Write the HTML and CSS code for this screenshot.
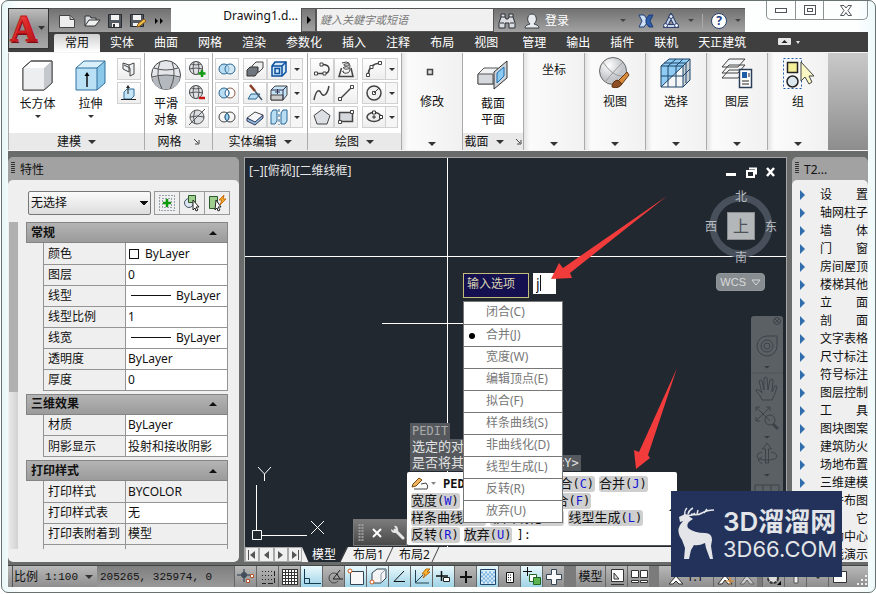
FILE: index.html
```html
<!DOCTYPE html>
<html lang="zh-CN">
<head>
<meta charset="utf-8">
<title>Drawing1.dwg</title>
<link rel="stylesheet" href="styles.css">
</head>
<body>
<div class="window">
  <header class="titlebar">
    <button class="app-button" aria-label="应用程序菜单">
      <svg width="39" height="39" viewBox="0 0 39 39">
        <defs>
          <linearGradient id="red" x1="0" y1="0" x2="1" y2="1"><stop offset="0" stop-color="#ff8d84"/><stop offset=".45" stop-color="#e22b2b"/><stop offset="1" stop-color="#a30f16"/></linearGradient>
        </defs>
        <text x="2" y="34" class="logo-back">A</text>
        <text x="1" y="32" class="logo-front">A</text>
        <path d="M29 17h7l-3.500 4z" fill="#333"/>
      </svg>
    </button>
    <div class="quick-access">
      <button aria-label="新建"><svg width="18" height="16" viewBox="0 0 18 16"><path d="M1.500 2.500h11l4 4v8h-15z" fill="#eee" stroke="#444"/><path d="M12 2.500v4h4" fill="#bbb" stroke="#444"/></svg></button>
      <button aria-label="打开"><svg width="18" height="16" viewBox="0 0 18 16"><path d="M2 13V3h5l1 2h5v3" fill="#d8dce2" stroke="#333"/><path d="M2 13l4-6h11l-5 6z" fill="#f1f1f1" stroke="#333"/></svg></button>
      <button aria-label="保存"><svg width="16" height="16" viewBox="0 0 16 16"><path d="M1.500 1.500h13v13h-13z" fill="#51585f" stroke="#272b30"/><path d="M4 2h8v5H4zM5 10h7v4H5z" fill="#f2f2f2"/><path d="M6 11h2v3H6z" fill="#333"/></svg></button>
      <button aria-label="另存为"><svg width="18" height="16" viewBox="0 0 18 16"><path d="M1.500 1.500h13v12h-13z" fill="#51585f" stroke="#272b30"/><path d="M4 2h8v5H4zM4 10h5v3H4z" fill="#f2f2f2"/><path d="M8 14l1-3 6-5 2 2-6 5z" fill="#f3c14b" stroke="#8a5a14"/></svg></button>
      <button aria-label="更多"><svg width="10" height="8" viewBox="0 0 10 8"><path d="M1 1l3 3-3 3zM6 1l3 3-3 3z"/></svg></button>
    </div>
    <h1 class="doc-title">Drawing1.d...</h1>
    <button class="search-toggle" aria-label="展开搜索"><svg width="6" height="8" viewBox="0 0 6 8"><path d="M1 0l4 4-4 4z"/></svg></button>
    <input class="search" type="text" aria-label="搜索" placeholder="鍵入关鍵字或短语">
    <div class="infobar">
      <button aria-label="查找"><svg width="18" height="18" viewBox="0 0 18 18"><path d="M3 2h4v3l1 2h2l1-2V2h4v3l2 6v5h-6v-5H7v5H1v-5l2-6z" fill="#d9dde2" stroke="#2c3036"/><path d="M2 11h4M12 11h4M3 5h4M11 5h4" stroke="#2c3036"/></svg></button>
      <button class="signin"><svg width="16" height="16" viewBox="0 0 16 16"><path d="M1 15c0-3 3-3 5-4-2-2-3-4-2-7 1-4 7-4 8 0 1 3 0 5-2 7 2 1 5 1 5 4z" fill="#e8ebef" stroke="#3b4046"/></svg>登录</button>
      <i class="caret dark push"></i>
      <button aria-label="交换"><svg width="16" height="14" viewBox="0 0 16 14"><path d="M1 1h5l3 4v4l-3 4H1l3-6z" fill="#cfe0f5" stroke="#1d3d78"/><path d="M15 1h-4L8 5v4l3 4h4l-3-6z" fill="#2e5ca8" stroke="#1d3d78"/></svg></button>
      <button aria-label="联机"><svg width="18" height="16" viewBox="0 0 18 16"><path d="M9 3L4 13h10z" fill="none" stroke="#2d3f6b" stroke-width="4"/><path d="M9 3L4 13h10z" fill="none" stroke="#c9d5ea" stroke-width="2"/><circle cx="9" cy="3.500" r="2" fill="#e5ebf5" stroke="#2d3f6b"/><circle cx="3.500" cy="12.500" r="2" fill="#e5ebf5" stroke="#2d3f6b"/><circle cx="14.500" cy="12.500" r="2" fill="#e5ebf5" stroke="#2d3f6b"/></svg></button>
      <i class="caret dark"></i>
      <span class="rule"></span>
      <button class="help" aria-label="帮助">?</button>
      <i class="caret dark"></i>
    </div>
    <div class="window-controls">
      <button aria-label="最小化"><svg width="14" height="8" viewBox="0 0 14 8"><rect x="1.500" y="2.500" width="11" height="4" fill="#fff" stroke="#50565c"/></svg></button>
      <button aria-label="还原"><svg width="14" height="11" viewBox="0 0 14 11"><rect x="1.500" y=".5" width="11" height="9" fill="#fff" stroke="#50565c"/><rect x="4.500" y="3.500" width="5" height="3" fill="#fff" stroke="#50565c"/></svg></button>
      <button class="close" aria-label="关闭"><svg width="14" height="11" viewBox="0 0 14 11"><path d="M1.500.5h3.500l2 2.500 2-2.500h3.500L9 5.500l3.500 5H9l-2-3-2 3H1.500l3.500-5z" fill="#fff" stroke="#50565c"/></svg></button>
    </div>
  </header>

  <nav class="tabs">
    <a class="tab active" href="#">常用</a><a class="tab" href="#">实体</a><a class="tab" href="#">曲面</a><a class="tab" href="#">网格</a><a class="tab" href="#">渲染</a><a class="tab" href="#">参数化</a><a class="tab" href="#">插入</a><a class="tab" href="#">注释</a><a class="tab" href="#">布局</a><a class="tab" href="#">视图</a>
    <span class="tab-group"><a class="tab" href="#">管理</a><a class="tab" href="#">输出</a><a class="tab" href="#">插件</a><a class="tab" href="#">联机</a><a class="tab" href="#">天正建筑</a></span>
    <button class="ribbon-toggle" aria-label="最小化功能区"><svg width="22" height="8" viewBox="0 0 22 8"><rect width="13" height="7" rx="1" fill="#e6e6e6"/><path d="M3.500 5l3-3 3 3z" fill="#222"/><path d="M18 3h4l-2 3z" fill="#e6e6e6"/></svg></button>
  </nav>

  <div class="ribbon">
    <section class="panel">
      <div class="tools">
        <button class="big"><svg width="32" height="32" viewBox="0 0 32 32"><path d="M1 9l8-7h21v22l-8 7H1z" fill="#fff" stroke="#4a4a4a"/><path d="M1 9h21v22H1z" fill="#eceef0"/><path d="M22 9l8-7v22l-8 7z" fill="#c4c8cc"/><path d="M1 9l8-7h21v22l-8 7H1z" fill="none" stroke="#4a4a4a"/></svg><span>长方体</span><i class="caret"></i></button>
        <button class="big"><svg width="32" height="32" viewBox="0 0 32 32"><path d="M1 9l8-7h21v22l-8 7H1z" fill="#d9effa"/><path d="M1 9h21v22H1z" fill="#b9e0f5"/><path d="M22 9l8-7v22l-8 7z" fill="#8cc8ea"/><path d="M1 9l8-7h21v22l-8 7H1zM1 9h21v22M22 9l8-7" fill="none" stroke="#2e6f9c"/><path d="M12 28V15" stroke="#111" stroke-width="1.500"/><path d="M9.500 17l2.500-4 2.500 4z"/></svg><span>拉伸</span><i class="caret"></i></button>
        <div class="stack">
          <button class="small" aria-label="多段体"><svg viewBox="0 0 18 18"><path d="M3 3l6 2v7l-6-3zM9 5l5-2v11l-4 2v-8l-6-3" fill="#eef1f4" stroke="#444"/></svg></button>
          <button class="small" aria-label="按住并拖动"><svg viewBox="0 0 18 18"><path d="M4 15V8l3-3h7v7l-3 3z" fill="#c5e4f5" stroke="#2e6f9c"/><path d="M1 15.500h15M8 10V3" stroke="#222"/><path d="M6 4l2-3 2 3z" fill="#222"/></svg></button>
        </div>
      </div>
      <footer>建模<i class="caret wide"></i></footer>
    </section>

    <section class="panel">
      <div class="tools">
        <button class="big narrow"><svg width="32" height="32" viewBox="0 0 32 32"><circle cx="16" cy="16" r="14.500" fill="#e3e6ea" stroke="#444"/><path d="M2 19q14-5 28 0-2 11-14 11.500Q4 30 2 19z" fill="#b4b9bf"/><path d="M4 9q12 4 24 0M2 18q14-4 28 0M10 3q-5 13 2 27M22 3q5 13-2 27" fill="none" stroke="#555"/></svg><span>平滑<br>对象</span></button>
        <div class="stack">
          <button class="small" aria-label="提高平滑度"><svg viewBox="0 0 18 18"><circle cx="8" cy="8" r="6.500" fill="#e0e3e6" stroke="#444"/><path d="M1 9q7-2 14 0M3 4q5 2 10 0M6 2q-2 6 0 12M10 2q2 6 0 12" fill="none" stroke="#555"/><path d="M14 10v7M10.500 13.500h7" stroke="#129a12" stroke-width="2.500"/></svg></button>
          <button class="small" aria-label="降低平滑度"><svg viewBox="0 0 18 18"><circle cx="8" cy="8" r="6.500" fill="#e0e3e6" stroke="#444"/><path d="M1 9q7-2 14 0M3 4q5 2 10 0M6 2q-2 6 0 12M10 2q2 6 0 12" fill="none" stroke="#555"/><path d="M11 14h6" stroke="#cc1717" stroke-width="2.500"/></svg></button>
          <button class="small" aria-label="优化网格"><svg viewBox="0 0 18 18"><circle cx="9" cy="9" r="7" fill="#dcdfe2" stroke="#555"/><path d="M2 9q7-2 14 0M7 2q-3 7 0 14M1 17L17 1" fill="none" stroke="#555"/></svg></button>
        </div>
      </div>
      <footer>网格<svg class="launcher" width="7" height="7" viewBox="0 0 7 7"><path d="M1 1l4 4M6 2v4H2" fill="none" stroke="#444"/></svg></footer>
    </section>

    <section class="panel">
      <div class="tools">
        <div class="stack first">
          <button class="small" aria-label="并集"><svg viewBox="0 0 18 18"><circle cx="6" cy="9" r="5" fill="#b9ddf2" stroke="#2a6795"/><circle cx="12" cy="9" r="5" fill="#b9ddf2" fill-opacity=".6" stroke="#2a6795"/></svg></button>
          <button class="small" aria-label="差集"><svg viewBox="0 0 18 18"><circle cx="12" cy="9" r="5" fill="#fff" stroke="#8a5c48"/><circle cx="6" cy="9" r="5" fill="#b9ddf2" stroke="#2a6795"/><path d="M9 5q-4 4 0 8 4-4 0-8z" fill="#fff" stroke="#2a6795"/></svg></button>
          <button class="small" aria-label="交集"><svg viewBox="0 0 18 18"><circle cx="6" cy="9" r="5" fill="none" stroke="#444"/><circle cx="12" cy="9" r="5" fill="none" stroke="#444"/><path d="M9 5q4 4 0 8-4-4 0-8z" fill="#9fd0ee" stroke="#2a6795"/></svg></button>
        </div>
        <div class="stack spaced">
          <button class="small" aria-label="干涉"><svg viewBox="0 0 18 18"><path d="M6 6l4-4h7v6l-4 4H6z" fill="#eee" stroke="#444"/><path d="M1 10l3-3h8v5l-3 4H1z" fill="#70767d" stroke="#333"/></svg></button>
          <button class="small" aria-label="剖切"><svg viewBox="0 0 18 18"><path d="M2 15l3-5h9l-4 5z" fill="#b9ddf2" stroke="#2a6795"/><path d="M4 1l5 6" stroke="#8a3b22" stroke-width="2.500"/><path d="M9 7l3 4 4 5" fill="none" stroke="#456" stroke-width="1.500"/></svg></button>
          <button class="small" aria-label="加厚"><svg viewBox="0 0 18 18"><path d="M1 10l8-6 8 3-8 8z" fill="#f4f6f8" stroke="#444"/><path d="M1 10l8 4 8-7v3l-8 7-8-4z" fill="#8dbddd" stroke="#335"/></svg></button>
        </div>
        <div class="stack">
          <div class="split"><button class="small" aria-label="拉伸面"><svg viewBox="0 0 18 18"><path d="M2 6l3-4h11v10l-4 4H2z" fill="#cfe6f7" stroke="#0b4f9c" stroke-width="1.500"/><path d="M5 8.500h4.500v5H5zM12 16V6H2M12 6l4-4" fill="none" stroke="#0b4f9c" stroke-width="1.500"/></svg></button><button class="drop" aria-label="更多"><i class="caret"></i></button></div>
          <div class="split"><button class="small" aria-label="提取边"><svg viewBox="0 0 18 18"><path d="M1 6l4-4h12v9l-4 5H1z" fill="#c5e4f5" stroke="#444"/><path d="M1 11h12v5H1z" fill="#ccc" stroke="#444"/><path d="M13 6v10M1 6h12l4-4M5 8h5M7.500 5v5" fill="none" stroke="#335"/></svg></button><button class="drop" aria-label="更多"><i class="caret"></i></button></div>
          <div class="split"><button class="small" aria-label="分割"><svg viewBox="0 0 18 18"><path d="M1 5l2-3h4v11l-2 3H1zM11 5l2-3h4v11l-2 3h-4z" fill="#b9ddf2" stroke="#2a6795"/><path d="M9 1v16" stroke="#2a6795" stroke-dasharray="3 2"/></svg></button><button class="drop" aria-label="更多"><i class="caret"></i></button></div>
        </div>
      </div>
      <footer>实体编辑<i class="caret wide"></i></footer>
    </section>

    <section class="panel">
      <div class="tools">
        <div class="stack first">
          <button class="small" aria-label="多段线"><svg viewBox="0 0 18 18"><path d="M3 13.500h8q5 0 5-4.500t-7-4.500" fill="none" stroke="#444" stroke-width="1.500"/><path d="M1.500 12h3v3h-3zM7 3h3v3H7zM10 12h3v3h-3z" fill="#fff" stroke="#444"/></svg></button>
          <button class="small" aria-label="样条曲线"><svg viewBox="0 0 18 18"><path d="M1 16C3 6 6 5 8 9s6 3 8-7" fill="none" stroke="#444" stroke-width="1.500"/></svg></button>
          <button class="small" aria-label="多边形"><svg viewBox="0 0 18 18"><path d="M9 1.500l8 6-3 8.500H4L1 7.500z" fill="#dce0e4" stroke="#444"/></svg></button>
        </div>
        <div class="stack">
          <button class="small" aria-label="螺旋"><svg viewBox="0 0 18 18"><path d="M5 3q5-2 7 0 1 3-3 3-4-1-1-2 5-1 5 2 0 4-5 3-3-1-1-2 6-1 6 3-1 4-6 3-3-2 0-2" fill="none" stroke="#444"/><path d="M4.500 8L2 16.500h14L14 8" fill="none" stroke="#444" stroke-width="1.500"/></svg></button>
          <button class="small" aria-label="直线"><svg viewBox="0 0 18 18"><path d="M3 15L15 3" stroke="#444" stroke-width="1.500"/><path d="M1.500 13.500h3v3h-3zM13.500 1.500h3v3h-3z" fill="#fff" stroke="#444"/></svg></button>
          <button class="small" aria-label="矩形"><svg viewBox="0 0 18 18"><path d="M2.500 4.500h13v9h-13z" fill="#d5d8dc" stroke="#444" stroke-width="1.500"/><path d="M1.500 12.500h3v3h-3zM13.500 2.500h3v3h-3z" fill="#fff" stroke="#444"/></svg></button>
        </div>
        <div class="stack offset">
          <div class="split"><button class="small" aria-label="圆弧"><svg viewBox="0 0 18 18"><path d="M3 15Q4 4 15 3" fill="none" stroke="#444" stroke-width="1.500"/><path d="M1.500 13.500h3v3h-3zM5 5.500h3v3H5zM13.500 1.500h3v3h-3z" fill="#fff" stroke="#444"/></svg></button><button class="drop" aria-label="更多"><i class="caret"></i></button></div>
          <div class="split"><button class="small" aria-label="圆"><svg viewBox="0 0 18 18"><circle cx="9" cy="9" r="7" fill="#f2f2f2" stroke="#444" stroke-width="1.500"/><path d="M9 9l5-5M7.500 7.500h3v3h-3z" fill="#fff" stroke="#444"/></svg></button><button class="drop" aria-label="更多"><i class="caret"></i></button></div>
          <div class="split"><button class="small" aria-label="椭圆"><svg viewBox="0 0 18 18"><ellipse cx="9" cy="9" rx="7" ry="4.500" fill="#eee" stroke="#444" stroke-width="1.500"/><path d="M9 7v4M7 9h4" stroke="#333"/><path d="M7.500 3h3v3h-3zM14.500 7.500h3v3h-3z" fill="#fff" stroke="#333"/></svg></button><button class="drop" aria-label="更多"><i class="caret"></i></button></div>
        </div>
      </div>
      <footer>绘图<i class="caret wide"></i></footer>
    </section>

    <button class="slim"><svg width="34" height="34" viewBox="0 0 34 34"><path d="M12.500 13.500h5v5h-5z" fill="#ddd" stroke="#444" stroke-width="1.500"/></svg>修改<i class="caret wide"></i></button>

    <section class="panel">
      <div class="tools centred">
        <button class="big narrow"><svg width="32" height="32" viewBox="0 0 32 32"><path d="M1 15l6-6h14v13l-4 3H1z" fill="#f0f2f4" stroke="#555"/><path d="M1 15h15v10H1z" fill="#d5d8dc" stroke="#555"/><path d="M17 13l13-11v17L17 30z" fill="#cfd5da" stroke="#333"/><path d="M20 14l7-6v9l-7 7z" fill="#8ccaf0" stroke="#1a6bb0"/></svg><span>截面<br>平面</span></button>
      </div>
      <footer>截面<i class="caret wide"></i><svg class="launcher" width="7" height="7" viewBox="0 0 7 7"><path d="M1 1l4 4M6 2v4H2" fill="none" stroke="#444"/></svg></footer>
    </section>

    <button class="slim text-only">坐标<i class="caret wide"></i></button>
    <button class="slim"><svg width="34" height="34" viewBox="0 0 34 34"><defs><radialGradient id="ball" cx=".35" cy=".3"><stop offset="0" stop-color="#fff"/><stop offset="1" stop-color="#c2c6ca"/></radialGradient></defs><circle cx="15" cy="15" r="13.500" fill="url(#ball)" stroke="#666"/><path d="M5 6q10 16 22 14M25 6Q17 14 7 26" fill="none" stroke="#999"/><path d="M20 25l9-9 2 3-7 9z" fill="#d58a3c" stroke="#6b3a12"/><path d="M14 31q0-6 6-7l4 4q-3 5-10 3z" fill="#8f4f24" stroke="#5b2d0e"/></svg>视图<i class="caret wide"></i></button>
    <button class="slim"><svg width="34" height="34" viewBox="0 0 34 34"><path d="M2 10l8-7h21v21l-7 7H2z" fill="#f4f6f8"/><path d="M2 10l8-7h21l-7 7L2 31z" fill="#8fcbf2"/><path d="M24 10l7-7v21l-7 7z" fill="#c9d0d6"/><path d="M2 10l8-7h21v21l-7 7H2zM2 10h22v21M24 10l7-7M9 10v21M17 10v21M2 20h22l7-7M9 10l8-7M17 10l7-7M5 7h22v20M2 31L24 10" fill="none" stroke="#1c4468"/></svg>选择<i class="caret wide"></i></button>
    <button class="slim"><svg width="34" height="34" viewBox="0 0 34 34"><path d="M2 22l7-8h16l-7 8zM2 17l7-8h16l-7 8zM2 11l7-8h16l-7 8z" fill="#f4f5f6" stroke="#444"/><path d="M19.500 13.500h12v18h-12z" fill="#fff" stroke="#2c3e5a" stroke-width="1.500"/><path d="M22 16h5v6h-5z" fill="#1f5ca8"/><path d="M29 17v4M22 25h7M22 28h7" stroke="#222"/></svg>图层<i class="caret wide"></i></button>
    <button class="slim"><svg width="34" height="34" viewBox="0 0 34 34"><path d="M2.500 2.500h18v30h-18z" fill="none" stroke="#1c5ca8" stroke-dasharray="2 2"/><path d="M6.500 6.500h10v10h-10z" fill="#f4f09a" stroke="#222" stroke-width="1.500"/><circle cx="11.500" cy="25.500" r="5.500" fill="#dbe6ee" stroke="#222" stroke-width="1.500"/><path d="M20 6v19l4-4 4 7 3-2-3-6h5z" fill="#fbf7c4" stroke="#444"/></svg>组<i class="caret wide"></i></button>
    <div class="ribbon-rest"></div>
  </div>

  <main class="workspace">
    <aside class="palette">
      <h2 class="palette-title">特性</h2>
      <div class="palette-body">
        <div class="selector">
          <select aria-label="选择对象"><option>无选择</option></select>
          <div class="button-row">
            <button aria-label="切换"><svg width="18" height="18" viewBox="0 0 18 18"><path d="M1.500 1.500h15v15h-15zM4.500 4.500h9v9h-9z" fill="none" stroke="#456" stroke-dasharray="1 2"/><path d="M9 5v8M5 9h8" stroke="#0a9a0a" stroke-width="2.500"/></svg></button>
            <button aria-label="选择对象"><svg width="18" height="18" viewBox="0 0 18 18"><circle cx="6" cy="9" r="4.500" fill="#dde5ee" stroke="#456"/><path d="M5.500 1.500h7v7h-7z" fill="#9fcf8f" stroke="#2a5a2a"/><path d="M10 6l6 7h-3l2 3-2 1-1-3-2 2z" fill="#fff" stroke="#222"/></svg></button>
            <button aria-label="快速选择"><svg width="18" height="18" viewBox="0 0 18 18"><path d="M1.500 2.500h8v12h-8z" fill="#9fcf8f" stroke="#2a5a2a"/><path d="M16 1l-5 5h3l-2 5 6-6h-3z" fill="#ffb52e" stroke="#c76a10"/><path d="M8 6l5 7h-3l2 3-2 1-1-3-2 2z" fill="#fff" stroke="#222"/></svg></button>
          </div>
        </div>
        <div class="property-area">
          <div class="scroll-strip"><span></span></div>
          <div class="groups">
            <section>
              <button class="group-head">常规<i class="caret up"></i></button>
              <table>
                <tr><th>颜色</th><td><span class="swatch"></span>ByLayer</td></tr>
                <tr><th>图层</th><td>0</td></tr>
                <tr><th>线型</th><td><span class="line"></span>ByLayer</td></tr>
                <tr><th>线型比例</th><td>1</td></tr>
                <tr><th>线宽</th><td><span class="line"></span>ByLayer</td></tr>
                <tr><th>透明度</th><td>ByLayer</td></tr>
                <tr><th>厚度</th><td>0</td></tr>
              </table>
            </section>
            <section>
              <button class="group-head">三维效果<i class="caret up"></i></button>
              <table>
                <tr><th>材质</th><td>ByLayer</td></tr>
                <tr><th>阴影显示</th><td>投射和接收阴影</td></tr>
              </table>
            </section>
            <section>
              <button class="group-head">打印样式<i class="caret up"></i></button>
              <table>
                <tr><th>打印样式</th><td class="locked">BYCOLOR</td></tr>
                <tr><th>打印样式表</th><td>无</td></tr>
                <tr><th>打印表附着到</th><td class="locked">模型</td></tr>
                <tr><th></th><td class="locked"></td></tr>
              </table>
            </section>
          </div>
        </div>
      </div>
    </aside>

    <section class="viewport">
      <div class="canvas">
        <svg class="drawing" width="541" height="389" viewBox="245 158 541 389">
          <path d="M447.500 158v389M245 256.500h541M382 323.500h82" stroke="#fff"/>
          <path d="M256.500 485v46M262 535.500h45M252.500 530.500h9v9h-9zM258 467l6.500 7 6.500-7M264.500 474v7M311 521l13 13M324 521l-13 13" fill="none" stroke="#fff"/>
          <g fill="none" stroke="#fff" stroke-width="2"><path d="M726 174.500h10" stroke-width="3"/><path d="M747 171h7v6h-7zM749 168.500h7v6"/><path d="M767 168l7 8M774 168l-7 8" stroke-width="2.500"/></g>
          <circle cx="741" cy="226" r="28" fill="none" stroke="#48515b" stroke-width="7"/>
          <rect x="727.500" y="212.500" width="27" height="27" fill="#b4b7b9" stroke="#8a8e92"/>
          <g class="compass"><text x="741" y="201">北</text><text x="741" y="262">南</text><text x="711" y="231">西</text><text x="771" y="231">东</text></g>
          <text class="cube-face" x="741" y="232">上</text>
        </svg>
        <div class="view-label">[−][俯视][二维线框]</div>
        <button class="wcs">WCS<svg width="10" height="7" viewBox="0 0 10 7"><path d="M1 1h8L5 6z" fill="none" stroke="#d5d8da"/></svg></button>
        <div class="navbar">
          <svg width="32" height="230" viewBox="751 316 32 230" fill="none" stroke="#3c4248">
            <circle cx="777" cy="321" r="3.500"/><path d="M775 319l4 4M779 319l-4 4"/>
            <path d="M757 346a10 10 0 0 1 10-10h10v10a10 10 0 0 1-20 0z"/><circle cx="767" cy="346" r="6"/><circle cx="767" cy="346" r="3"/>
            <path d="M751 373h32" stroke="#50555a"/>
            <path d="M762 400q-2-6-6-9 0-3 4 0l2 2-3-12q1-2 3 0l2 9v-12q2-2 3 0l1 12 2-10q2-2 3 0l-1 12 3-6q2-1 2 1-2 8-5 13z"/>
            <path d="M756 407l14 14M770 407l-14 14M756 411v-4h4M766 407h4v4M756 417v4h4"/><circle cx="770" cy="420" r="5"/><path d="M773 424l5 5" stroke-width="3"/>
            <path d="M765.500 463v-14h-3l4.500-6 4.500 6h-3v14z"/><path d="M762 452q-5 1-5 4 0 4 10 4t10-4q0-3-6-4M762 457l-4 3 4 4"/>
            <path d="M755 485h24v12h-24zM763 485v12M771 485v12"/>
            <path d="M764 366h6l-3 2.500zM764 436h6l-3 2.500zM764 474h6l-3 2.500z" fill="#343a40" stroke="none"/>
          </svg>
        </div>
        <div class="history"><span>PEDIT</span><span class="zh">选定的对象不是多段线</span><span class="zh">是否将其转换为多段线?<kbd> &lt;Y&gt;</kbd></span></div>
        <div class="command">
          <div class="command-tools">
            <svg class="grip" width="6" height="18" viewBox="0 0 6 18"><path d="M1.500 0v18M4.500 0v18" stroke="#999" stroke-width="2" stroke-dasharray="2 1"/></svg>
            <button aria-label="关闭"><svg width="10" height="10" viewBox="0 0 10 10"><path d="M1 1l8 8M9 1L1 9" stroke="#fff" stroke-width="2"/></svg></button>
            <button aria-label="自定义"><svg width="15" height="15" viewBox="0 0 15 15"><path d="M5 5l8 8" stroke="#e6e6e6" stroke-width="3" stroke-linecap="round"/><path d="M4 1l2 3-2 2-3-2q0 4 4 4t3-4-4-3z" fill="#e6e6e6"/></svg></button>
          </div>
          <div class="command-text">
            <div class="command-line"><svg width="28" height="14" viewBox="0 0 28 14"><path d="M3 12h13q2-3-1-6l-5 1" fill="none" stroke="#444"/><path d="M1 10l1-3 6-6 3 2-6 6z" fill="#f1b35c" stroke="#7a4a14"/><path d="M20 5h5l-2.500 3z" fill="#888"/></svg><b>PEDIT</b><span>输入选项<kbd>[</kbd></span><button class="opt">闭合<kbd>(<em>C</em>)</kbd></button><button class="opt">合并<kbd>(<em>J</em>)</kbd></button></div>
            <div class="command-line"><button class="opt">宽度<kbd>(<em>W</em>)</kbd></button><button class="opt">编辑顶点<kbd>(<em>E</em>)</kbd></button><button class="opt">拟合<kbd>(<em>F</em>)</kbd></button></div>
            <div class="command-line"><button class="opt">样条曲线<kbd>(<em>S</em>)</kbd></button><button class="opt">非曲线化<kbd>(<em>D</em>)</kbd></button><button class="opt">线型生成<kbd>(<em>L</em>)</kbd></button></div>
            <div class="command-line"><button class="opt">反转<kbd>(<em>R</em>)</kbd></button><button class="opt">放弃<kbd>(<em>U</em>)</kbd></button><kbd>]:</kbd></div>
            <i class="caret up expand"></i>
          </div>
        </div>
        <label class="dyn-prompt" for="dyn">输入选项</label>
        <div class="dyn-input"><input id="dyn" type="text" value="j"></div>
        <ul class="menu">
          <li><button>闭合(C)</button></li><li><button class="current">合并(J)</button></li><li><button>宽度(W)</button></li><li><button>编辑顶点(E)</button></li><li><button>拟合(F)</button></li><li><button>样条曲线(S)</button></li><li><button>非曲线化(D)</button></li><li><button>线型生成(L)</button></li><li><button>反转(R)</button></li><li><button>放弃(U)</button></li>
        </ul>
        <svg class="drawing arrows" width="541" height="389" viewBox="245 158 541 389" fill="#f23b3b"><path d="M551 279l8-16 4 5 104-72-97 77 2 5zM636 469l-2-19 5 2 38-84-29 87 2 3z"/></svg>
      </div>
      <nav class="sheets">
        <div class="sheet-nav">
          <button aria-label="第一个"><svg width="10" height="10" viewBox="0 0 10 10"><path d="M1.500 0v10" stroke="#555"/><path d="M8 1v8L3 5z" fill="#555"/></svg></button>
          <button aria-label="上一个"><svg width="10" height="10" viewBox="0 0 10 10"><path d="M8 1v8L3 5z" fill="#555"/></svg></button>
          <button aria-label="下一个"><svg width="10" height="10" viewBox="0 0 10 10"><path d="M2 1v8l5-4z" fill="#555"/></svg></button>
          <button aria-label="最后一个"><svg width="10" height="10" viewBox="0 0 10 10"><path d="M8.500 0v10" stroke="#555"/><path d="M2 1v8l5-4z" fill="#555"/></svg></button>
        </div>
        <a class="sheet active" href="#">模型</a><a class="sheet" href="#">布局1</a><a class="sheet" href="#">布局2</a>
      </nav>
    </section>

    <aside class="palette tools-palette">
      <h2 class="palette-title">T2...</h2>
      <ul class="tool-list">
        <li>设 置</li><li>轴网柱子</li><li>墙 体</li><li>门 窗</li><li>房间屋顶</li><li>楼梯其他</li><li>立 面</li><li>剖 面</li><li>文字表格</li><li>尺寸标注</li><li>符号标注</li><li>图层控制</li><li>工 具</li><li>图块图案</li><li>建筑防火</li><li>场地布置</li><li>三维建模</li><li>文件布图</li><li>其 它</li><li>帮助中心</li><li>功能演示</li>
      </ul>
    </aside>
  </main>

  <footer class="status">
    <button class="scale">比例 <kbd>1:100</kbd><i class="caret wide"></i></button>
    <output class="coords">205265, 325974, 0</output>
    <button class="toggle" aria-label="推断约束"><svg viewBox="0 0 20 20"><path d="M1 8h13M8 2v13M6 6h4v4H6z" fill="none" stroke="#234"/><path d="M10.500 12.500h3v3h-3zM14.500 7.500h3v3h-3z" fill="#fff" stroke="#b4532a"/></svg></button>
    <button class="toggle" aria-label="捕捉"><svg viewBox="0 0 20 20"><path d="M4.500 4v12M7.500 4v12M10.500 4v12M13.500 4v12" stroke="#222" stroke-dasharray="1 3"/><path d="M16.500 4v12.500H4" fill="none" stroke="#222" stroke-dasharray="5 2"/></svg></button>
    <button class="toggle" aria-label="栅格"><svg viewBox="0 0 20 20"><path d="M2.500 2.500h15v15h-15z" fill="#fff"/><path d="M2.500 2v16M5.500 2v16M8.500 2v16M11.500 2v16M14.500 2v16M17.500 2v16M2 2.500h16M2 5.500h16M2 8.500h16M2 11.500h16M2 14.500h16M2 17.500h16" stroke="#333"/></svg></button>
    <button class="toggle on" aria-label="正交"><svg viewBox="0 0 20 20"><path d="M2.500 2v14.500H19M2.500 11.500h5v5" fill="none" stroke="#123a50"/></svg></button>
    <button class="toggle" aria-label="极轴"><svg viewBox="0 0 20 20"><path d="M14 8a5 5 0 1 0 0 6" fill="none" stroke="#444"/><path d="M16 3l-7 9h10M13 7l3 5" fill="none" stroke="#222"/></svg></button>
    <button class="toggle on" aria-label="对象捕捉"><svg viewBox="0 0 20 20"><path d="M4.500 4.500h13v13h-13z" fill="#f8f8f8" stroke="#345"/><circle cx="4" cy="4" r="2" fill="#fff" stroke="#d05a1a"/></svg></button>
    <button class="toggle on" aria-label="三维对象捕捉"><svg viewBox="0 0 20 20"><path d="M4 6l5-4h9v9l-5 5H4z" fill="#f4f4f4" stroke="#345"/><path d="M13 7v9M13 7l5-5" stroke="#89a"/><circle cx="4" cy="15" r="2" fill="#fff" stroke="#d05a1a"/></svg></button>
    <button class="toggle on" aria-label="对象追踪"><svg viewBox="0 0 20 20"><path d="M14 4L4 14.500h11" fill="none" stroke="#111"/></svg></button>
    <button class="toggle on" aria-label="动态UCS"><svg viewBox="0 0 20 20"><path d="M3.500 3v13H17M4 15l7-7" fill="none" stroke="#245"/><path d="M14 2l-4 5h3l-2 4 7-6h-3l3-3z" fill="#ffb52e" stroke="#b66a10"/></svg></button>
    <button class="toggle on" aria-label="动态输入"><svg viewBox="0 0 20 20"><path d="M2 9h12M7.500 4v10" stroke="#111" stroke-width="1.500"/><path d="M9.500 10.500h6v4h-6z" fill="#fff" stroke="#222"/></svg></button>
    <button class="toggle" aria-label="线宽"><svg viewBox="0 0 20 20"><path d="M4 10h12M10 4v12" stroke="#111" stroke-width="2"/></svg></button>
    <button class="toggle on" aria-label="透明度"><svg viewBox="0 0 20 20"><path d="M2.500 2.500h15v15h-15z" fill="#d8ecfa" stroke="#246"/><path d="M3 5.500h14M3 9.500h14M3 13.500h14" stroke="#7fb4dc" stroke-width="2" stroke-dasharray="2 2"/><path d="M5 7.500h12M5 11.500h12M5 15.500h12" stroke="#7fb4dc" stroke-width="2" stroke-dasharray="2 2"/></svg></button>
    <button class="toggle" aria-label="快捷特性"><svg viewBox="0 0 20 20"><path d="M6.500 5.500h7v10h-7z" fill="#fff" stroke="#111"/><path d="M8 8h4M8 10.500h4M8 13h4" stroke="#111" stroke-dasharray="1 1"/></svg></button>
    <button class="toggle on" aria-label="选择循环"><svg viewBox="0 0 20 20"><path d="M1 4.500h9M5.500 0v9" stroke="#111"/><path d="M7.500 7.500h7v7h-7z" fill="#fff" stroke="#262"/><path d="M11.500 10.500h7v7h-7z" fill="#5cb450" stroke="#262"/></svg></button>
    <button class="toggle" aria-label="注释监视器"><svg viewBox="0 0 20 20"><path d="M7.500 2.500h5v5h5v5h-5v5h-5v-5h-5v-5h5z" fill="#fafafa" stroke="#345"/></svg></button>
    <span class="gap"></span>
    <button class="model">模型</button>
    <button class="toggle" aria-label="快速查看布局"><svg viewBox="0 0 20 20"><path d="M4.500 2.500h12v12h-12z" fill="#fff" stroke="#333"/><path d="M7 12V6l5 6zM4 17.500h13" fill="#ddd" stroke="#333"/></svg></button>
    <button class="toggle" aria-label="快速查看图形"><svg viewBox="0 0 20 20"><path d="M2.500 3.500h7v7h-7zM11.500 3.500h7v7h-7zM2.500 13.500h7v2h-7zM11.500 13.500h7v2h-7z" fill="#fff" stroke="#333"/></svg></button>
    <span class="gap fill"></span>
    <button class="annotation"><svg width="14" height="18" viewBox="0 0 14 18"><path d="M7 8l7 8h-4l-3-3-3 3H0z" fill="#fff" stroke="#333"/></svg>1:1</button>
    <button class="toggle" aria-label="注释可见性"><svg viewBox="0 0 20 20"><path d="M10 8l7 9h-4l-3-4-3 4H3z" fill="#fff" stroke="#333"/><path d="M15 10v8M11 14h8" stroke="#e98a20"/></svg></button>
    <button class="toggle" aria-label="自动缩放"><svg viewBox="0 0 20 20"><path d="M10 8l7 9h-4l-3-4-3 4H3z" fill="#ccc" stroke="#666"/></svg></button>
    <span class="gap slit"></span>
    <button class="toggle" aria-label="切换工作空间"><svg viewBox="0 0 20 20"><circle cx="9" cy="11" r="5" fill="#ddd" stroke="#333" stroke-width="2" stroke-dasharray="3 1"/><path d="M13 18l4-4v4z"/></svg></button>
    <button class="toggle lock" aria-label="隔离对象"><svg viewBox="0 0 20 20"><path d="M8 8h4v8H8z" fill="#eee" stroke="#555"/></svg></button>
    <button class="toggle" aria-label="状态栏菜单"><i class="caret wide"></i></button>
    <button class="toggle" aria-label="全屏显示"><svg viewBox="0 0 20 20"><path d="M3.500 4.500h13v11h-13z" fill="#fff" stroke="#333"/></svg></button>
    <svg class="resize" width="12" height="12" viewBox="0 0 12 12"><path d="M9 1h2v2H9zM5 5h2v2H5zM9 5h2v2H9zM1 9h2v2H1zM5 9h2v2H5zM9 9h2v2H9z" fill="#eee"/></svg>
  </footer>

  <div class="watermark">
    <svg width="40" height="54" viewBox="0 0 40 54"><path d="M3 10l6-3q3 0 5 3l3 2-3 2q-4 3-2 7 6 5 17 5 7 0 7 7l-1 6 2 13h-3l-4-11-1-5q-6 3-11 2l-3 5-2 9H8l1-11-3-8q-6-8-2-15l3-4-3 1z" fill="#e3e5e8"/><path d="M9 8Q8 4 11 1M11 8q6 1 8-2M12 7q1-4 5-6M15 7q6 2 11-1t12-3M21 7l1-4M28 6l3-4" fill="none" stroke="#e3e5e8" stroke-width="1.500"/></svg>
    <div><strong>3D溜溜网</strong><span>3D66.COM</span></div>
  </div>
</div>
</body>
</html>
```

FILE: styles.css
```css
* { box-sizing: border-box; }
body {
  margin: 0;
  background: #fff;
  color: #111;
  font: 12px/16px "Noto Sans", "Noto Sans CJK SC", sans-serif;
  overflow: hidden;
}
button, input, select, kbd { font: inherit; color: inherit; }
button { border: 0; padding: 0; background: none; display: flex; align-items: center; justify-content: center; white-space: nowrap; }
a { color: inherit; text-decoration: none; }
h1, h2, ul { margin: 0; padding: 0; font: inherit; list-style: none; }
svg { flex: none; display: block; }

.caret { flex: none; border: 3px solid transparent; border-top: 3px solid #333; border-bottom: 0; }
.caret.wide { border-width: 4px 4px 0; }
.caret.up { border-width: 0 4px 4px; border-bottom: 4px solid #111; }
.caret.dark { border-top-color: #444; }

.window {
  position: relative;
  display: flex;
  flex-direction: column;
  height: calc(100vh - 1px);
  margin-left: 1px;
  padding: 7px 7px 5px 6px;
  border: 1px solid #687272;
  border-radius: 7px;
  background: linear-gradient(90deg, #e9f7f7, #fdfefe 2%, #fdfefe 98%, #eefafa);
}

/* Title bar */
.titlebar { display: flex; height: 24px; }
.app-button {
  z-index: 1;
  width: 41px;
  height: 41px;
  border: 1px solid #333;
  background: linear-gradient(#bdbdbd, #8d8d8d 50%, #a9a9a9);
}
.app-button svg { overflow: visible; }
.logo-back, .logo-front { font: bold 38px "Liberation Serif", serif; }
.logo-back { fill: #7d0b10; }
.logo-front { fill: url(#red); stroke: #c1171c; }
.quick-access {
  display: flex;
  justify-content: space-around;
  width: 122px;
  padding: 0 4px 0 6px;
  border-top: 1px solid #555;
  background: linear-gradient(#727272, #9c9c9c);
}
.doc-title { flex: 1; padding: 0 3px; text-align: right; line-height: 16px; white-space: nowrap; }
.search-toggle { width: 15px; border: 1px solid #555; background: linear-gradient(#777, #a0a0a0); }
.search { width: 178px; padding: 0 3px; border: 1px solid #555; border-radius: 0; background: #f0f0f0; font-size: 11px; outline: 0; }
.search::placeholder { color: #777; font-style: italic; opacity: 1; }
.infobar {
  display: flex;
  align-items: center;
  gap: 8px;
  width: 251px;
  padding: 0 4px;
  border-top: 1px solid #555;
  background: linear-gradient(#727272, #a2a2a2);
}
.infobar .push { margin-left: auto; margin-right: 4px; }
.signin { gap: 5px; color: #fff; }
.rule { width: 1px; height: 14px; background: #aaa; }
.help { width: 16px; height: 16px; border: 1px solid #27406c; border-radius: 50%; background: #fff; color: #1d3f86; font-weight: bold; }
.window-controls {
  display: flex;
  width: 102px;
  height: 19px;
  margin: -7px 0 0 21px;
  border: 1px solid #8b9294;
  border-top: 0;
  border-radius: 0 0 5px 5px;
}
.window-controls button { width: 28px; }
.window-controls button + button { border-left: 1px solid #8b9294; }
.window-controls .close { flex: 1; }

/* Ribbon tabs */
.tabs { display: flex; align-items: flex-end; height: 20px; padding-left: 46px; background: #3f3f3f; color: #fff; }
.tab { display: inline-block; height: 18px; padding: 0 10px; line-height: 18px; }
.tab.active { padding: 0 11px; border-radius: 2px 2px 0 0; background: linear-gradient(#cfcfcf, #fff); color: #111; }
.tab-group { display: flex; margin-left: 4px; }
.ribbon-toggle { align-self: center; margin-left: 22px; }

/* Ribbon */
.ribbon {
  display: grid;
  grid-template-columns: 136px 68px 95px 94px repeat(7, 61px) 1fr;
  height: 99px;
  border: solid #f4f4f4;
  border-width: 1px 0;
  background: #fff;
}
.panel { display: flex; flex-direction: column; border-left: 1px solid #aaa; }
.tools { display: flex; flex: 1; padding: 5px 0 0 2px; }
.tools.centred { justify-content: center; padding-left: 0; }
.panel footer {
  display: flex;
  align-items: center;
  justify-content: center;
  gap: 7px;
  height: 17px;
  background: #e9e9e9;
}
.launcher { margin-left: 4px; }
.big { flex-direction: column; justify-content: flex-start; width: 53px; padding-top: 1px; }
.big.narrow { width: 38px; }
.big span { padding-top: 5px; }
.big .caret { margin-top: 3px; }
.stack { display: flex; flex-direction: column; gap: 2px; }
.stack.spaced, .stack.offset { margin-left: 4px; }
.small { width: 24px; height: 22px; border: 1px solid #cfd1d3; background: linear-gradient(#fff, #eee); }
.small svg { width: 18px; height: 18px; }
.split { display: flex; }
.drop { width: 12px; border: 1px solid #cfd1d3; border-left: 0; background: #f6f6f6; }
.slim {
  flex-direction: column;
  justify-content: flex-start;
  gap: 4px;
  padding: 3px 0 4px;
  border-left: 1px solid #aaa;
  background: linear-gradient(90deg, #e4e4e4, #fbfbfb 10%, #f1f1f1);
}
.slim .caret { margin-top: auto; }
.text-only { padding-top: 9px; }
.ribbon-rest { background: linear-gradient(#c9c9c9, #8d8d8d); }

/* Workspace */
.workspace {
  display: grid;
  grid-template-columns: 231px 1fr 76px;
  grid-template-rows: minmax(0, 1fr);
  gap: 5px;
  flex: 1;
  min-height: 0;
  padding: 6px 0 3px;
  background: #6a6c6c;
}
.palette { display: flex; flex-direction: column; min-width: 0; border-radius: 5px; background: #a2a2a2; overflow: hidden; }
.palette-title { height: 23px; padding: 5px 0 0 12px; }
.palette-title::before {
  content: "";
  float: left;
  width: 4px;
  height: 12px;
  margin-left: -9px;
  background: repeating-linear-gradient(#333 0 1px, transparent 1px 2px);
}
.palette-body { display: flex; flex-direction: column; flex: 1; min-height: 0; padding: 11px 0 13px; border-radius: 5px; background: #efefef; }
.selector { display: flex; gap: 3px; height: 31px; padding: 0 9px 7px 20px; }
.selector select {
  flex: 1;
  padding: 0 2px;
  border: 1px solid #777;
  border-radius: 2px;
  appearance: none;
  background: linear-gradient(to bottom right, #111 50%, transparent 50%) no-repeat right 2px center / 4px 5px, linear-gradient(to bottom left, #111 50%, transparent 50%) no-repeat right 6px center / 4px 5px, linear-gradient(#fbfbfb, #ddd);
}
.button-row { display: flex; width: 76px; border: 1px solid #999; }
.button-row button { flex: 1; }
.button-row button + button { border-left: 1px solid #999; }
.property-area { display: flex; flex: 1; gap: 8px; min-height: 0; padding: 0 11px 0 1px; }
.scroll-strip { display: flex; align-items: flex-end; width: 9px; background: #b0b0b0; }
.scroll-strip span { flex: 1; height: 48%; background: linear-gradient(90deg, #e8e8e8, #d2d2d2); }
.groups { flex: 1; overflow: hidden; }
.groups section { margin-bottom: 3px; }
.group-head { justify-content: space-between; width: 100%; height: 21px; padding: 0 10px 0 4px; border: 1px solid #858585; background: linear-gradient(#b4b4b4, #9b9b9b); font-weight: bold; }
.groups table { width: calc(100% - 17px); margin-left: 17px; border-collapse: collapse; table-layout: fixed; }
.groups th, .groups td { height: 21px; padding: 1px 2px 0; border: 1px solid #949494; line-height: 16px; white-space: nowrap; }
.groups tr:first-child > * { border-top: 0; }
.groups th { width: 82px; padding-left: 4px; font-weight: normal; text-align: left; }
.groups td { background: #fff; }
.groups .locked { background: #efefef; }
.swatch { display: inline-block; width: 10px; height: 10px; margin: 0 6px 0 1px; border: 1px solid #111; vertical-align: -1px; }
.line { display: inline-block; width: 40px; height: 1px; margin: 0 5px 0 3px; background: #111; vertical-align: 4px; }

/* Drawing area */
.viewport { display: flex; flex-direction: column; min-width: 0; border: 1px solid #a5a7a7; border-bottom: 0; }
.canvas { position: relative; flex: 1; background: #212830; overflow: hidden; }
.drawing { position: absolute; top: 0; left: 0; }
.compass { fill: #b9bdc1; font-size: 12px; text-anchor: middle; }
.cube-face { fill: #4c5258; font-size: 16px; text-anchor: middle; }
.view-label { position: absolute; top: 5px; left: 4px; color: #e6e6e6; }
.wcs {
  position: absolute;
  top: 115px;
  right: 21px;
  gap: 5px;
  height: 18px;
  padding: 0 3px;
  border: 1px solid #91969b;
  border-radius: 4px;
  background: #888d92;
  color: #d8dadc;
  font: 11px "Liberation Sans", sans-serif;
}
.navbar { position: absolute; top: 158px; right: 3px; border-radius: 3px 3px 0 0; background: #5b6065; }
.history {
  position: absolute;
  left: 165px;
  bottom: 76px;
  display: flex;
  flex-direction: column;
  align-items: flex-start;
  color: #e2e2e2;
  font: 12px/16px "DejaVu Sans Mono", "Noto Sans CJK SC", monospace;
}
.history span { padding: 0 2px; background: #55595d; }
.history span:first-child { color: #aaa; }
.history .zh { font-size: 13px; }
.history kbd { font-size: 12px; }
.command { position: absolute; left: 108px; bottom: 1px; display: flex; align-items: flex-end; width: 324px; }
.command-tools { display: flex; align-items: center; gap: 8px; width: 54px; height: 27px; padding-left: 4px; border: 1px solid #777; background: linear-gradient(#7b7b7b, #484848); }
.command-text {
  position: relative;
  flex: 1;
  padding: 3px 4px 2px;
  border-bottom: 1px solid #555;
  border-radius: 2px;
  background: #fff;
  color: #111;
  font: 13px/17px "DejaVu Sans Mono", "Noto Sans CJK SC", monospace;
}
.command-line { display: flex; align-items: center; gap: 4px; height: 17px; white-space: nowrap; }
.command kbd, .command-line b { font: 12px/16px "DejaVu Sans Mono", monospace; }
.command-line b { font-weight: bold; }
.opt { height: 16px; padding: 0 1px 0 0; border-radius: 3px; background: #cfcfcf; }
.opt em { color: #1515d6; font-style: normal; }
.expand { position: absolute; right: 0; top: 35px; }
.dyn-prompt { position: absolute; top: 115px; left: 218px; width: 66px; height: 25px; padding: 2px 3px; border: 1px solid #c4bd7c; background: #15104f; color: #d8d4b0; }
.dyn-input { position: absolute; top: 115px; left: 288px; width: 23px; height: 21px; background: #fff; }
.dyn-input input { width: 100%; height: 100%; padding: 0 3px; border: 0; background: none; font-size: 14px; outline: 0; }
.dyn-input::after { content: ""; position: absolute; left: 7px; top: 2px; width: 1px; height: 16px; background: #111; }
.menu { position: absolute; top: 143px; left: 218px; width: 100px; border: 1px solid #777; background: #fff; color: #777; }
.menu li { height: 22px; }
.menu li + li { border-top: 1px solid #777; }
.menu button { position: relative; justify-content: flex-start; width: 100%; height: 20px; padding-left: 22px; }
.menu .current::before { content: ""; position: absolute; left: 5px; top: 8px; width: 6px; height: 6px; border-radius: 50%; background: #000; }
.arrows { pointer-events: none; }

.sheets { display: flex; height: 15px; background: #f0f0f0; }
.sheet-nav { display: flex; width: 57px; }
.sheet-nav button { flex: 1; border: 1px solid #aaa; }
.sheet { position: relative; width: 46px; padding-left: 5px; line-height: 15px; }
.sheet::after { content: ""; position: absolute; top: 0; right: 4px; width: 1px; height: 15px; background: #444; transform: skewX(-25deg); }
.sheet.active { padding-left: 10px; background: #212830; color: #fff; clip-path: polygon(0 0, 100% 0, 84% 100%, 14% 100%); }

.tools-palette { border-radius: 5px 5px 0 0; }
.tool-list { flex: 1; padding-top: 6px; border-radius: 5px 5px 0 0; background: #efefef; overflow: hidden; }
.tool-list li { position: relative; width: 76px; height: 18px; padding-left: 28px; line-height: 18px; text-align-last: justify; white-space: nowrap; }
.tool-list li::before { content: ""; position: absolute; top: 4px; left: 8px; border: 5px solid transparent; border-left-color: #2f6dad; border-right: 0; }

/* Status bar */
.status { display: flex; height: 22px; border-top: 1px solid #444; background: linear-gradient(#b8b8b8, #8e8e8e); }
.status kbd, .coords { font: 11px/22px "Liberation Mono", monospace; }
.scale { gap: 7px; width: 85px; margin-left: 4px; padding-left: 1px; justify-content: flex-start; border-left: 1px solid #555; }
.coords { width: 137px; padding-left: 3px; background: linear-gradient(#7f7f7f, #999); white-space: nowrap; }
.toggle { width: 22px; border-left: 1px solid #666; }
.toggle svg { width: 20px; height: 20px; }
.toggle.on { background: linear-gradient(#e9f8fc, #9fd3e6); }
.gap { width: 12px; background: #7b7b7b; }
.gap.fill { flex: 1; }
.gap.slit { width: 5px; }
.model { width: 29px; }
.annotation { gap: 4px; width: 54px; }
.lock { flex: 0 0 22px; }
.resize { align-self: flex-end; margin: 0 0 1px 6px; }

.watermark {
  position: absolute;
  right: 33px;
  bottom: 15px;
  display: flex;
  align-items: center;
  gap: 7px;
  width: 171px;
  height: 86px;
  padding-left: 5px;
  background: #22325a;
  color: #e3e5e8;
}
.watermark div { display: flex; flex-direction: column; }
.watermark strong { font: 600 26px/30px "Inter", "Noto Sans CJK SC", sans-serif; }
.watermark span { font: 22px/24px "Inter", sans-serif; }
```
